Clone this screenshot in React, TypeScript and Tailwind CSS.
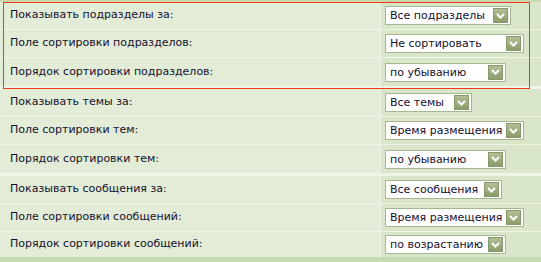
type Row = { label: string; value: string; w: number };

const groups: Row[][] = [
  [
    { label: "Показывать подразделы за:", value: "Все подразделы", w: 126 },
    { label: "Поле сортировки подразделов:", value: "Не сортировать", w: 139 },
    { label: "Порядок сортировки подразделов:", value: "по убыванию", w: 121 },
  ],
  [
    { label: "Показывать темы за:", value: "Все темы", w: 87 },
    { label: "Поле сортировки тем:", value: "Время размещения", w: 139 },
    { label: "Порядок сортировки тем:", value: "по убыванию", w: 121 },
  ],
  [
    { label: "Показывать сообщения за:", value: "Все сообщения", w: 117 },
    { label: "Поле сортировки сообщений:", value: "Время размещения", w: 139 },
    { label: "Порядок сортировки сообщений:", value: "по возрастанию", w: 121 },
  ],
];

function Select({ value, w }: { value: string; w: number }) {
  return (
    <div
      className="flex h-[19px] items-center justify-between border border-[#a4b78e] bg-white pl-[4px] pr-[2px]"
      style={{ width: w }}
    >
      <span className="whitespace-nowrap leading-none">{value}</span>
      <span className="flex h-[15px] w-[15px] shrink-0 items-center justify-center border border-[#86976a] bg-gradient-to-b from-[#b1bf95] to-[#8c9d6d]">
        <svg width="9" height="6" viewBox="0 0 9 6">
          <polyline points="1,1 4.5,4.5 8,1" fill="none" stroke="#fff" strokeWidth="2" />
        </svg>
      </span>
    </div>
  );
}

export default function App() {
  return (
    <div className="relative w-[541px] h-[262px] overflow-hidden bg-[#c6d9af] font-['DejaVu_Sans',sans-serif] text-[11px] text-[#14102e]">
      {groups.map((rows, gi) => (
        <div key={gi} className={gi < 2 ? "border-b-[3px] border-[#eef4e8]" : ""}>
          {rows.map((r, ri) => (
            <div
              key={r.label}
              className={
                "flex " +
                (ri < 2 ? "border-b border-[#eef4e8] " : "") +
                (gi === 0 && ri === 0 ? "h-[30px] pt-[2px]" : gi === 2 && ri === 2 ? "h-[25px]" : "h-[28px]")
              }
            >
              <div className="flex w-[380px] items-center bg-[#e2ecd6] pl-[10px]">{r.label}</div>
              <div className="flex flex-1 items-center border-l border-[#eef4e8] bg-[#dae6ca] pl-[4px]">
                <Select value={r.value} w={r.w} />
              </div>
            </div>
          ))}
        </div>
      ))}
      <div className="pointer-events-none absolute left-[3px] top-[2px] h-[87px] w-[527px] border border-[#f0391c]" />
    </div>
  );
}
